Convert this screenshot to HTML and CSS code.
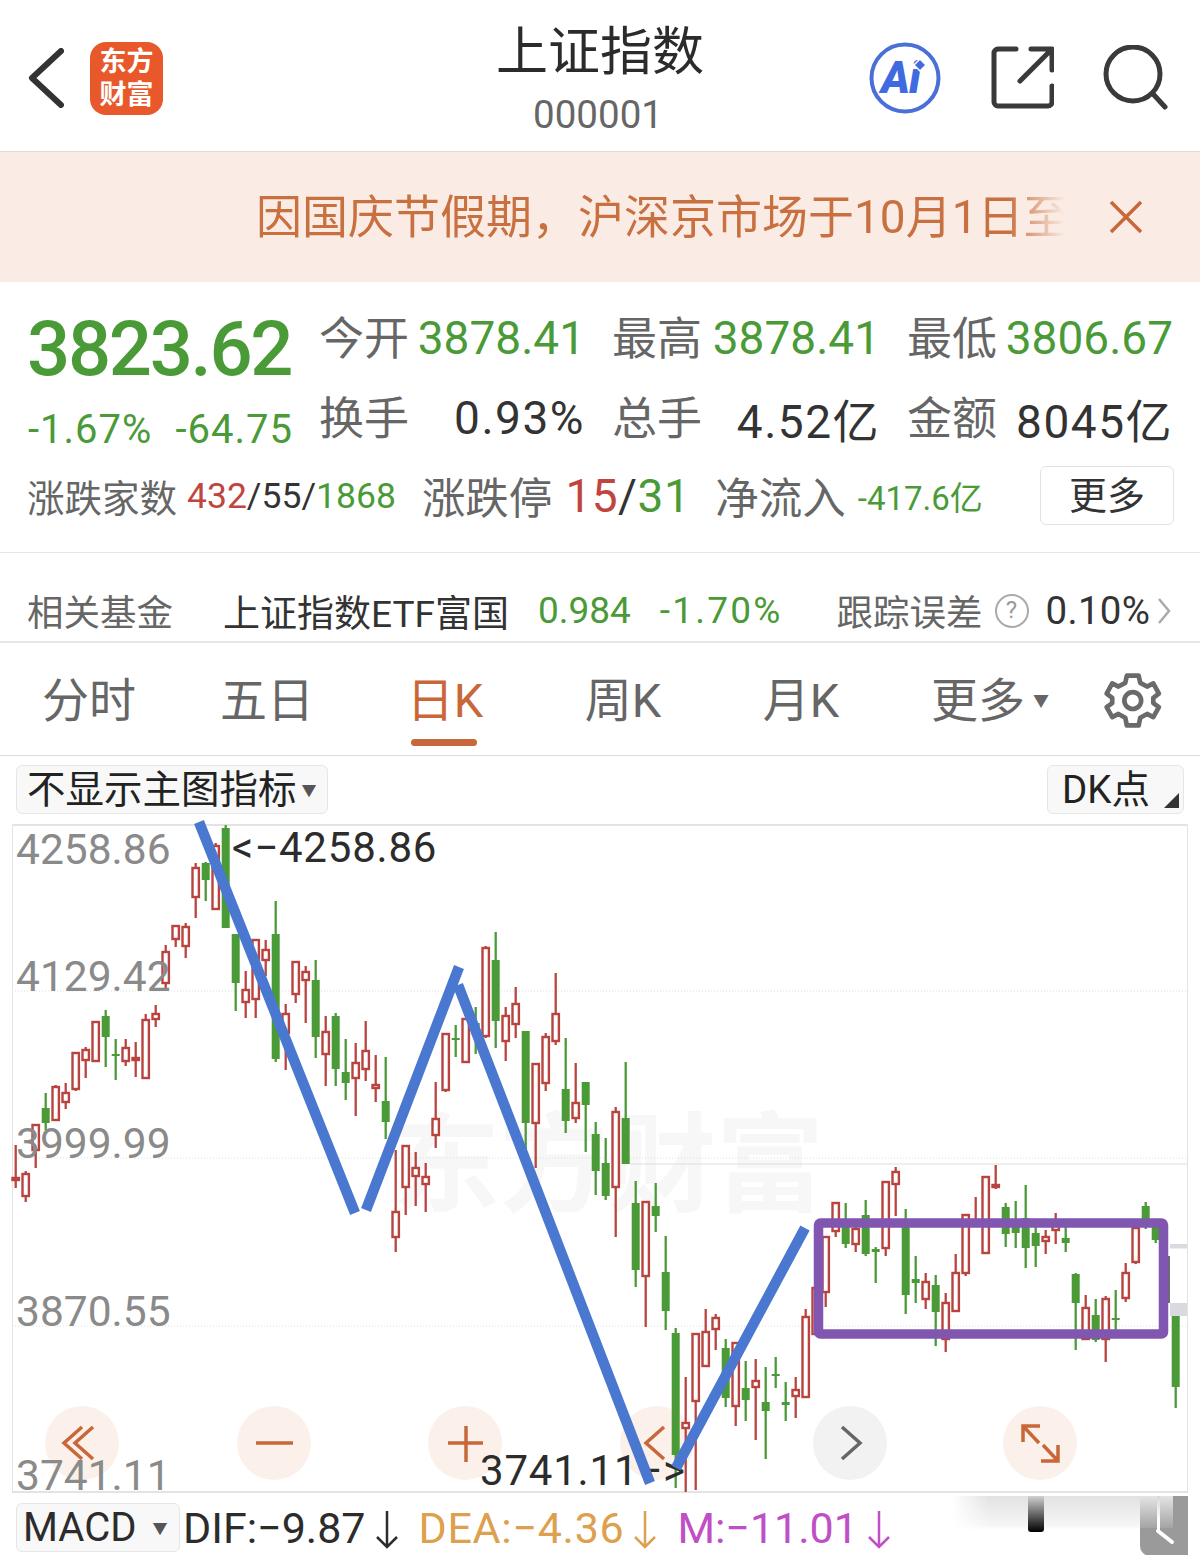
FILE: index.html
```html
<!DOCTYPE html>
<html lang="zh-CN">
<head>
<meta charset="utf-8">
<title>上证指数</title>
<link rel="stylesheet" href="styles.css">
</head>
<body>
<div class="page">
  <header class="hdr">
    <div class="hdr-left">
      <svg class="back" viewBox="0 0 36 60"><path d="M33 3 4 30l29 27"/></svg>
      <div class="logo">东方<br>财富</div>
    </div>
    <div class="hdr-mid">
      <div class="title">上证指数</div>
      <div class="code">000001</div>
    </div>
    <div class="hdr-right">
      <svg class="ic-ai" viewBox="0 0 72 72">
        <circle cx="36" cy="36" r="33.5"/>
        <text x="12" y="51">Ai</text>
        <path class="spark" d="M51 17l6 6-6 6-6-6z"/>
      </svg>
      <svg class="ic-line ic-share" viewBox="0 0 64 64"><path d="M26 3H8a4 4 0 0 0-4 4v49a4 4 0 0 0 4 4h50a4 4 0 0 0 4-4V40M41 3h21v21M61 4 30 35"/></svg>
      <svg class="ic-line ic-search" viewBox="0 0 66 66"><circle cx="31" cy="29" r="27"/><path d="M52 50l11 12"/></svg>
    </div>
  </header>

  <div class="notice">
    <div class="notice-text">因国庆节假期，沪深京市场于10月1日至</div>
    <svg class="notice-x" viewBox="0 0 34 34"><path d="M2 2l30 30M32 2 2 32"/></svg>
  </div>

  <section class="stats">
    <div class="stats-top">
      <div class="quote">
        <div class="price">3823.62</div>
        <div class="change"><span>-1.67%</span><span>-64.75</span></div>
      </div>
      <div class="grid">
        <div class="cell"><span class="lab">今开</span><span class="up">3878.41</span></div>
        <div class="cell"><span class="lab">最高</span><span class="up">3878.41</span></div>
        <div class="cell"><span class="lab">最低</span><span class="up">3806.67</span></div>
        <div class="cell"><span class="lab">换手</span><span class="val">0.93%</span></div>
        <div class="cell"><span class="lab">总手</span><span class="val">4.52亿</span></div>
        <div class="cell"><span class="lab">金额</span><span class="val">8045亿</span></div>
      </div>
    </div>
    <div class="breadth">
      <div class="b1"><span class="lab38">涨跌家数</span> <span class="nums"><span class="red">432</span>/55/<span class="grn">1868</span></span></div>
      <div class="b2"><span class="lab43">涨跌停</span> <span class="nums46"><span class="red">15</span>/<span class="grn">31</span></span></div>
      <div class="b3"><span class="lab43">净流入</span> <span class="flow">-417.6亿</span></div>
      <button class="more">更多</button>
    </div>
  </section>

  <section class="fund">
    <span class="f-lab">相关基金</span>
    <span class="f-name">上证指数ETF富国</span>
    <span class="f-p">0.984</span>
    <span class="f-c">-1.70%</span>
    <span class="f-lab f-err">跟踪误差</span>
    <span class="f-q">?</span>
    <span class="f-v">0.10%</span>
    <svg class="f-ch" viewBox="0 0 14 28"><path d="M2 2l10 12L2 26"/></svg>
  </section>

  <nav class="tabs">
    <div class="tab">分时</div>
    <div class="tab">五日</div>
    <div class="tab on">日K</div>
    <div class="tab">周K</div>
    <div class="tab">月K</div>
    <div class="tab">更多<span class="caret">▼</span></div>
    <div class="tab">
      <svg class="gear" viewBox="0 0 270 240">
        <path d="M112 37h38l5 23 22 12 20-10 18 33-18 13v17l18 13-18 32-20-10-22 12-5 25h-38l-5-25-22-12-20 10-18-32 18-13v-17l-18-13 18-33 20 10 22-12z"/>
        <circle cx="131" cy="117" r="27"/>
      </svg>
    </div>
  </nav>

  <div class="tools">
    <div class="pick">不显示主图指标<span class="pick-caret">▼</span></div>
    <div class="dk">DK点<i class="corner"></i></div>
  </div>

  <div class="chart">
    <svg class="plot" viewBox="12 824 1176 669">
      <text class="wm" x="392" y="1203">东方财富</text>
      <path class="dash" d="M12 991H1187M12 1158H1187M12 1326H1187"/>
      <path class="solid" d="M630 1164H1187"/>
      <path class="smudge" d="M1170 1244h17v4.500h-17zM1170 1303h17v13h-17z"/>
      <path class="smudge2" d="M1167 1256h3v47h-3z"/>
      <circle class="pad" cx="82" cy="1443" r="37"/>
      <circle class="pad" cx="274" cy="1443" r="37"/>
      <circle class="pad" cx="465" cy="1443" r="37"/>
      <circle class="pad" cx="657" cy="1443" r="37"/>
      <circle class="pad off" cx="850" cy="1443" r="37"/>
      <circle class="pad" cx="1040" cy="1443" r="37"/>
      <path class="ico" d="M82 1427 64 1443l18 16M93 1427 75 1443l18 16"/>
      <path class="ico" d="M256 1443h37M448 1443h35M466 1426v36"/>
      <path class="ico" d="M664 1427 646 1443l18 16"/>
      <path class="ico grey" d="M842 1427 860 1443l-18 16"/>
      <path class="ico" d="M1023 1442v-16h17M1023 1426l16 17M1058 1445v16h-17M1058 1461l-15-16"/>
      <g id="candles"></g>
      <text class="axis" x="16" y="864">4258.86</text>
      <text class="axis" x="16" y="991">4129.42</text>
      <text class="axis" x="16" y="1158">3999.99</text>
      <text class="axis" x="16" y="1326">3870.55</text>
      <text class="axis" x="16" y="1490">3741.11</text>
      <text class="mark" x="232" y="862">&lt;−4258.86</text>
      <text class="mark" x="480" y="1485">3741.11−&gt;</text>
      <path class="wave" d="M199 822 355 1213M366 1210 459 967M458 985 650 1483M676 1468 805 1228"/>
      <rect class="box" x="818.500" y="1223" width="345" height="111" rx="2"/>
    </svg>
  </div>

  <div class="macd">
    <div class="m-pick">MACD<span class="m-caret">▼</span></div>
    <div class="m-item">DIF:−9.87<svg class="arrow" viewBox="0 0 24 40"><path d="M12 1v36M2 27l10 10 10-10"/></svg></div>
    <div class="m-item dea">DEA:−4.36<svg class="arrow" viewBox="0 0 24 40"><path d="M12 1v36M2 27l10 10 10-10"/></svg></div>
    <div class="m-item mm">M:−11.01<svg class="arrow" viewBox="0 0 24 40"><path d="M12 1v36M2 27l10 10 10-10"/></svg></div>
    <svg class="wmark" viewBox="940 1492 260 63">
      <defs>
        <linearGradient id="gb" x1="0" y1="0" x2="0" y2="1"><stop offset="0" stop-color="#e2e2e2"/><stop offset=".85" stop-color="#f5f5f5"/><stop offset="1" stop-color="#fff"/></linearGradient>
        <linearGradient id="gl" x1="0" y1="0" x2="1" y2="0"><stop offset="0" stop-color="#fff" stop-opacity="1"/><stop offset=".2" stop-color="#fff" stop-opacity="0"/></linearGradient>
        <linearGradient id="gk" x1="0" y1="0" x2="0" y2="1"><stop offset="0" stop-color="#d0d0d0"/><stop offset="1" stop-color="#000"/></linearGradient>
        <linearGradient id="gp" x1="0" y1="0" x2="0" y2="1"><stop offset="0" stop-color="#e4e4e4"/><stop offset="1" stop-color="#a4a4a4"/></linearGradient>
        <linearGradient id="gs" x1="0" y1="0" x2="0" y2="1"><stop offset="0" stop-color="#d8d8d8"/><stop offset=".7" stop-color="#fff"/></linearGradient>
      </defs>
      <rect x="952" y="1495" width="188" height="34" fill="url(#gb)"/>
      <rect x="952" y="1495" width="188" height="34" fill="url(#gl)"/>
      <path d="M1028 1495h16v33a3 3 0 0 1-3 3h-10a3 3 0 0 1-3-3z" fill="url(#gk)"/>
      <path d="M1140 1495h48v60h-38a10 10 0 0 1-10-10z" fill="#9a9a9a"/>
      <rect x="1140" y="1495" width="17" height="32" fill="url(#gp)"/>
      <rect x="1160" y="1495" width="13" height="32" fill="url(#gp)"/>
      <rect x="1157" y="1495" width="3" height="35" fill="url(#gs)"/>
      <path d="M1158 1530l14 11" stroke="#fff" stroke-width="4" stroke-linecap="round" fill="none"/>
    </svg>
  </div>
</div>
<script src="chart.js"></script>
</body>
</html>
```
FILE: styles.css
```css
*{box-sizing:border-box}
html,body{margin:0;padding:0;background:#fff}
body{font-family:Roboto,"Noto Sans CJK SC",sans-serif;color:#333}
.page{width:1200px;height:1555px;overflow:hidden}

.hdr{height:152px;border-bottom:1px solid #dcdcdc;display:grid;grid-template-columns:1fr auto 1fr;align-items:center}
.hdr-left{display:flex;align-items:center;padding-left:28px;gap:26px;margin-top:5px}
.back{width:36px;height:60px;flex:none}
.back path{fill:none;stroke:#333;stroke-width:6;stroke-linecap:round;stroke-linejoin:round}
.logo{width:73px;height:73px;border-radius:16px;background:#e8582a;color:#fff;font-size:27px;line-height:33px;font-weight:700;text-align:center;padding-top:4px;flex:none}
.hdr-mid{align-self:start;text-align:center;padding-top:23px;margin-left:-4px}
.title{font-size:52px;line-height:60px;color:#2b2b2b;padding-left:4px}
.code{font-size:38.500px;line-height:44px;color:#666;margin-top:10px}
.hdr-right{display:flex;align-items:center;justify-content:flex-end;padding-right:32px;margin-top:5px}
.ic-ai{width:72px;height:72px}
.ic-ai circle{fill:none;stroke:#4a70d8;stroke-width:4}
.ic-ai text{font-family:Roboto,sans-serif;font-size:44px;font-weight:900;font-style:italic;fill:#3f6ae0;letter-spacing:-1px}
.spark{fill:#3f6ae0;stroke:#fff;stroke-width:1.500}
.ic-line path,.ic-line circle{fill:none;stroke:#3a3a3a;stroke-width:5;stroke-linecap:round;stroke-linejoin:round}
.ic-share{width:64px;height:64px;margin-left:49px}
.ic-search{width:66px;height:66px;margin-left:48px}

.notice{height:130px;background:#faece5;display:flex;align-items:center;padding-left:256px}
.notice-text{width:809px;overflow:hidden;white-space:nowrap;font-size:46px;line-height:60px;color:#c8703f;-webkit-mask-image:linear-gradient(90deg,#000 93%,transparent);mask-image:linear-gradient(90deg,#000 93%,transparent)}
.notice-x{width:34px;height:34px;margin-left:44px}
.notice-x path{fill:none;stroke:#c8673a;stroke-width:3.500}

.stats{height:271px;border-bottom:1px solid #e6e6e6;padding-top:16px}
.stats-top{display:flex;padding-left:27px}
.quote{width:294px;flex:none}
.price{font-size:76px;line-height:80px;font-weight:500;color:#4a9a38;letter-spacing:-2.300px;margin-top:11px}
.change{display:flex;font-size:40px;line-height:48px;color:#4a9a38;margin-top:17px;width:266px;padding-left:1px;justify-content:space-between;letter-spacing:1px}
.grid{display:grid;grid-template-columns:264px 266px 264px;column-gap:29px;grid-auto-rows:80px}
.cell{display:flex;justify-content:space-between;align-items:center;font-size:46px;white-space:nowrap}
.lab{color:#666;font-size:45px;margin:0 0 6px -2px}
.up{color:#4a9a38}
.val{color:#333;letter-spacing:1.500px}
.breadth{display:flex;align-items:center;padding:9px 26px 0 27px;height:60px;margin-top:3px;white-space:nowrap}
.b1,.b2,.b3{display:flex;align-items:center;gap:10px}
.b2{margin-left:26px;gap:13px}
.b3{margin-left:25px;gap:12px}
.lab38{font-size:37.500px;color:#666}
.lab43{font-size:43.500px;color:#666}
.nums{font-size:35.500px;color:#333}
.nums46{font-size:46px;color:#333;letter-spacing:.5px}
.flow{font-size:33px;color:#4a9a38}
.red{color:#c0453f}
.grn{color:#4a9a38}
.more{margin-left:auto;width:134px;height:59px;background:#fff;border:1px solid #e2e2e2;border-radius:6px;font:inherit;font-size:38px;line-height:50px;color:#333;padding:0}

.fund{height:90px;border-bottom:2px solid #e6e6e6;display:flex;align-items:center;padding:27px 0 0 27px;white-space:nowrap}
.f-lab{font-size:36.500px;color:#666}
.f-name{font-size:37px;color:#333;margin-left:50px}
.f-p{font-size:37px;color:#4a9a38;margin-left:29px}
.f-c{font-size:37px;color:#4a9a38;margin-left:29px;letter-spacing:2.200px}
.f-err{margin-left:54px}
.f-q{width:34px;height:34px;border-radius:50%;border:2.500px solid #aaa;color:#999;font-size:24px;line-height:29px;text-align:center;margin-left:12px}
.f-v{font-size:38.500px;color:#333;margin-left:17px;letter-spacing:.3px}
.f-ch{width:14px;height:28px;margin-left:7px}
.f-ch path{fill:none;stroke:#aaa;stroke-width:2.500}

.tabs{height:113px;border-bottom:1px solid #dcdcdc;display:grid;grid-template-columns:repeat(5,178px) 200px 88px;align-items:center;padding-top:4px}
.tab{position:relative;text-align:center;font-size:47px;line-height:60px;color:#666}
.tab.on{color:#c8673a}
.tab.on::after{content:"";position:absolute;left:55px;top:68px;width:66px;height:7px;border-radius:4px;background:#c8673a}
.caret{font-size:16px;margin-left:8px;vertical-align:10px;color:#666}
.gear{display:block;margin:0 auto;width:84px;height:75px}
.gear path,.gear circle{fill:none;stroke:#6a6a6a;stroke-width:15;stroke-linejoin:round}

.tools{height:68px;display:flex;align-items:center;justify-content:space-between;padding:0 16px 1px}
.pick,.dk{height:49px;background:#f8f8f8;border:1px solid #e6e6e6;border-radius:6px;display:flex;align-items:center;white-space:nowrap;color:#222;font-size:38.500px;padding-bottom:8px}
.pick{width:312px;padding-left:10px}
.pick-caret{font-size:15px;margin:8px 0 0 5px;color:#555}
.dk{width:137px;padding-left:14px;position:relative}
.corner{position:absolute;right:4px;bottom:5px;width:0;height:0;border-left:15px solid transparent;border-bottom:15px solid #333}

.chart{position:relative;width:1176px;height:669px;margin-left:12px;border:1px solid #e3e3e3;border-width:2px 1px 2px 1px}
.plot{position:absolute;left:-1px;top:-2px;width:1176px;height:669px;overflow:visible}
.wm{font-family:"Noto Sans CJK SC",sans-serif;font-size:108px;font-weight:700;fill:#f7f7f7}
.dash{fill:none;stroke:#dedede;stroke-width:1;stroke-dasharray:1 2}
.solid{fill:none;stroke:#dedede;stroke-width:1}
.smudge{fill:#d9d9e0}
.smudge2{fill:#6d6d70}
.pad{fill:#fbf1ea}
.pad.off{fill:#f2f2f2}
.ico{fill:none;stroke:#c8673a;stroke-width:3.500}
.ico.grey{stroke:#666}
.candle-r{fill:#fff;stroke:#b9433f;stroke-width:2.400}
.wick-r{stroke:#b9433f;stroke-width:2.300}
.candle-g{fill:#4a9a38;stroke:none}
.wick-g{stroke:#4a9a38;stroke-width:2.300}
.axis{font-size:42.500px;fill:#8a8a8a}
.mark{font-size:42px;fill:#2c2c2c;letter-spacing:.8px}
.wave{fill:none;stroke:#4a78d0;stroke-width:10.500}
.box{fill:none;stroke:#8056b0;stroke-width:9.500}

.macd{position:relative;height:63px;display:flex;align-items:center;padding:6px 0 0 16px;white-space:nowrap;font-size:43px;color:#2c2c2c}
.m-pick{width:164px;height:49px;background:#f8f8f8;border:1px solid #e6e6e6;border-radius:6px;display:flex;align-items:center;padding-left:6px;font-size:40px;flex:none}
.m-caret{font-size:15px;margin-left:16px;color:#555}
.m-item{display:flex;align-items:center;margin-left:3px}
.dea{color:#dca04e;margin-left:20px;letter-spacing:.7px}
.mm{color:#bf4fc6;margin-left:20px}
.arrow{width:24px;height:40px;margin-left:9px;margin-top:4px}
.arrow path{fill:none;stroke:currentColor;stroke-width:2.500}
.wmark{position:absolute;left:940px;top:0;width:260px;height:63px}
```
FILE: chart.js
```js
// [type, high, body top, body bottom, low]; one candle every 10px from x = 15.7
var data = [
["r",1145,1177,1179,1188],["r",1171,1173,1197,1202],["r",1124,1124,1151,1168],["g",1093,1108,1123,1130],
["r",1085,1086,1121,1121],["r",1083,1092,1103,1109],["r",1052,1052,1090,1091],["r",1047,1049,1061,1078],
["r",1021,1021,1062,1062],["g",1010,1016,1037,1067],["g",1039,1054,1055,1080],["r",1039,1047,1062,1066],
["r",1042,1057,1060,1077],["r",1014,1019,1079,1079],["r",1005,1013,1020,1027],["r",945,951,984,988],
["r",925,925,940,947],["r",923,926,947,958],["r",863,867,898,918],["g",862,863,880,901],
["r",843,845,910,910],["g",825,828,928,928],["g",934,934,983,1011],["r",971,989,1003,1018],
["r",939,939,1000,1018],["r",940,949,961,976],["g",901,934,1059,1062],["r",1004,1013,1034,1070],
["r",961,961,995,1003],["r",966,971,981,1023],["g",960,980,1037,1058],["r",1016,1031,1055,1086],
["g",1013,1016,1069,1086],["g",1039,1072,1083,1100],["r",1043,1062,1079,1116],["r",1021,1050,1070,1081],
["r",1055,1084,1089,1102],["g",1057,1101,1122,1139],["r",1150,1211,1238,1252],["r",1145,1145,1188,1215],
["r",1152,1167,1177,1206],["r",1163,1176,1185,1212],["r",1082,1118,1136,1148],["r",1033,1033,1091,1092],
["g",1025,1038,1039,1057],["r",1018,1018,1063,1063],["g",1007,1023,1035,1054],["r",946,947,1037,1038],
["g",932,960,1021,1048],["r",1007,1015,1042,1061],["r",987,1003,1025,1038],["g",1031,1031,1123,1153],
["r",1063,1063,1124,1168],["r",1033,1036,1084,1091],["r",973,1013,1042,1045],["g",1038,1089,1121,1133],
["r",1063,1102,1119,1123],["g",1082,1082,1105,1152],["g",1122,1134,1171,1195],["g",1138,1163,1196,1200],
["r",1107,1111,1188,1237],["g",1062,1118,1164,1164],["g",1181,1203,1270,1287],["r",1201,1201,1277,1327],
["g",1183,1206,1216,1232],["g",1236,1272,1311,1330],["g",1328,1333,1455,1488],["r",1377,1422,1429,1492],
["r",1333,1333,1402,1490],["r",1309,1331,1367,1367],["r",1314,1317,1330,1350],["g",1339,1348,1398,1407],
["r",1342,1342,1407,1426],["g",1361,1388,1400,1421],["r",1359,1380,1388,1440],["g",1367,1402,1411,1459],
["g",1357,1374,1375,1388],["g",1382,1402,1405,1421],["r",1377,1389,1397,1418],["r",1309,1316,1398,1398],
["r",1287,1287,1335,1335],["r",1236,1236,1293,1307],["r",1202,1202,1232,1237],["g",1203,1222,1244,1248],
["r",1222,1228,1245,1252],["g",1200,1215,1254,1256],["g",1247,1249,1252,1283],["r",1181,1181,1249,1256],
["r",1167,1171,1185,1216],["g",1209,1227,1295,1314],["g",1256,1279,1283,1303],["r",1273,1281,1300,1309],
["g",1275,1285,1312,1346],["r",1293,1302,1340,1352],["r",1254,1272,1312,1312],["r",1214,1214,1274,1276],
["r",1197,1219,1219,1219],["r",1176,1176,1254,1254],["r",1165,1184,1185,1189],["g",1203,1207,1234,1247],
["g",1201,1227,1233,1248],["g",1185,1218,1248,1268],["g",1227,1233,1246,1267],["r",1230,1236,1242,1254],
["r",1213,1225,1231,1244],["g",1227,1238,1243,1252],["g",1273,1274,1303,1350],["r",1295,1307,1340,1340],
["g",1299,1315,1340,1342],["r",1296,1298,1340,1362],["g",1290,1318,1319,1335],["r",1263,1272,1299,1302],
["r",1227,1227,1263,1264],["g",1202,1206,1227,1229],["g",1225,1227,1240,1243],null,
["g",1316,1316,1387,1408]
];
var NS = "http://www.w3.org/2000/svg";
var host = document.getElementById("candles");
function el(name, attrs, cls) {
  var n = document.createElementNS(NS, name);
  for (var k in attrs) n.setAttribute(k, attrs[k]);
  n.setAttribute("class", cls);
  host.appendChild(n);
}
data.forEach(function (d, i) {
  if (!d) return;
  var x = 15.7 + 10 * i, t = d[0], hi = d[1], top = d[2], bot = d[3], lo = d[4];
  el("line", { x1: x, x2: x, y1: hi, y2: lo }, "wick-" + t);
  if (t === "r") {
    el("rect", { x: x - 3.2, y: top + 1, width: 6.4, height: Math.max(bot - top - 2, 2) }, "candle-r");
  } else {
    el("rect", { x: x - 4, y: top, width: 8, height: Math.max(bot - top, 2) }, "candle-g");
  }
});
```
